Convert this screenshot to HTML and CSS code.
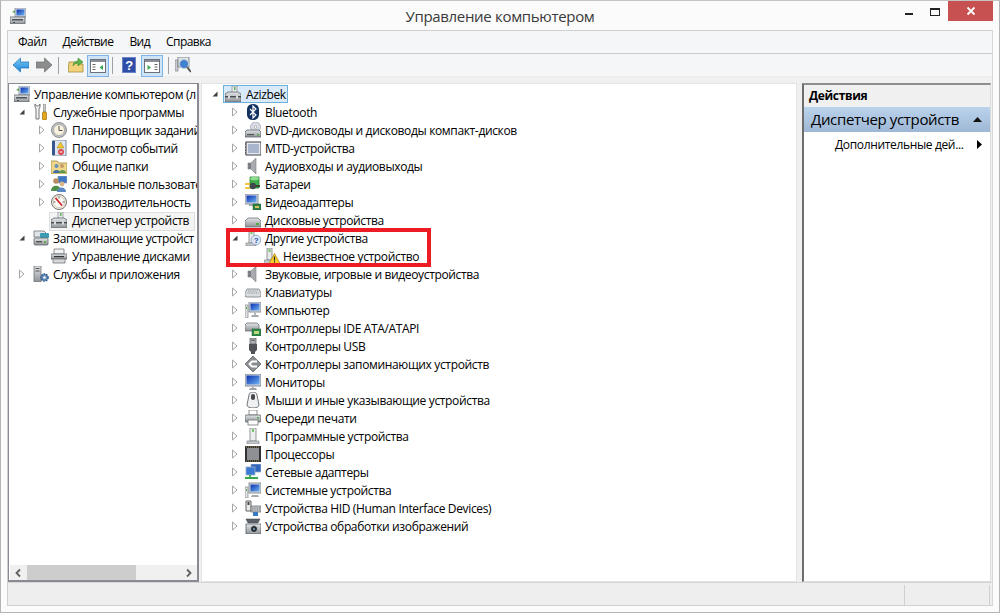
FILE: index.html
```html
<!DOCTYPE html>
<html lang="ru">
<head>
<meta charset="utf-8">
<title>Управление компьютером</title>
<link rel="stylesheet" href="styles.css">
</head>
<body>
<svg class="defs" width="0" height="0" aria-hidden="true">
<defs>
<linearGradient id="blue" x1="0" y1="0" x2="1" y2="1"><stop offset="0" stop-color="#0b2fb0"/><stop offset="1" stop-color="#6fb4f0"/></linearGradient>
<linearGradient id="metal" x1="0" y1="0" x2="0" y2="1"><stop offset="0" stop-color="#e4e6e8"/><stop offset="1" stop-color="#8d9296"/></linearGradient>
<linearGradient id="arrowb" x1="0" y1="0" x2="0" y2="1"><stop offset="0" stop-color="#7cc8f5"/><stop offset="1" stop-color="#1c86d8"/></linearGradient>
<symbol id="exp-c" viewBox="0 0 10 10"><path d="M2.500 1 7 5 2.500 9z" fill="#fff" stroke="#a6a6a6"/></symbol>
<symbol id="exp-o" viewBox="0 0 10 10"><path d="M7.500 2.500v5h-5z" fill="#404040"/></symbol>
<symbol id="mgmt" viewBox="0 0 16 16"><rect x="5" y="0" width="11" height="9" fill="#d5dde6" stroke="#7d8a96" stroke-width=".8"/><rect x="6.500" y="1.500" width="8" height="6" fill="url(#blue)"/><path d="M2 4l3-2v3z" fill="#5aa75a"/><rect x="0" y="9" width="15" height="7" fill="url(#metal)" stroke="#5d6469" stroke-width=".8"/><rect x="2" y="11" width="11" height="1.500" fill="#4d5358"/><rect x="3" y="14" width="2" height="1" fill="#4d5358"/></symbol>
<symbol id="tools" viewBox="0 0 16 16"><path d="M2 0v3l1 2v10h3V5l1-2V0L5.500 2h-2z" fill="#f4f4f4" stroke="#666" stroke-width=".9"/><rect x="10.500" y="0" width="2" height="8" fill="#c8c8c8" stroke="#777" stroke-width=".5"/><rect x="9.500" y="8" width="4" height="8" rx="1" fill="#e6a818" stroke="#8a6405" stroke-width=".6"/></symbol>
<symbol id="clock" viewBox="0 0 16 16"><circle cx="8" cy="8" r="7.500" fill="#c3c7cb" stroke="#777" stroke-width=".8"/><circle cx="8" cy="8" r="5.500" fill="#f7f1de" stroke="#8c8c8c" stroke-width=".6"/><path d="M8 4v4.500h3.500" fill="none" stroke="#555" stroke-width="1"/></symbol>
<symbol id="evlog" viewBox="0 0 16 16"><rect x="2" y="0" width="13" height="16" fill="#dde6f2" stroke="#5f6e8a" stroke-width=".8"/><rect x="1" y="1" width="3" height="14" fill="#3a5690"/><path d="M9.500 2l3.500 6H6z" fill="#f6c92f" stroke="#9a7a10" stroke-width=".5"/><circle cx="10" cy="12" r="3" fill="#d9474a"/><rect x="8.500" y="11.500" width="3" height="1" fill="#fff"/></symbol>
<symbol id="share" viewBox="0 0 16 16"><path d="M0 3h6l2 2h8v11H0z" fill="#efd68a" stroke="#a58b3f" stroke-width=".8"/><circle cx="5.500" cy="8" r="2" fill="#6b8fb8"/><path d="M2 15c0-4 7-4 7 0z" fill="#3d6ea8"/><circle cx="11" cy="8" r="2" fill="#c59a6d"/><path d="M8 15c0-4 7-4 7 0z" fill="#5a9a52"/></symbol>
<symbol id="users" viewBox="0 0 16 16"><rect x="7" y="0" width="9" height="7" fill="#3f78c4" stroke="#8da1b8" stroke-width=".7"/><circle cx="5" cy="5" r="2.800" fill="#b88c62"/><path d="M0 15c0-7 10-7 10 0z" fill="#4f8f4a"/><circle cx="11" cy="8" r="2.400" fill="#d8b48a"/><path d="M6 16c0-6 9-6 9 0z" fill="#5a88c0"/></symbol>
<symbol id="perf" viewBox="0 0 16 16"><circle cx="8" cy="8" r="7.500" fill="#efe9da" stroke="#777" stroke-width="1"/><circle cx="8" cy="8" r="5.500" fill="#fbfbf6" stroke="#b5b0a0" stroke-width=".5"/><path d="M4.500 4 11 11.500" stroke="#d2232a" stroke-width="1.800"/><path d="M8 2.500v2M13.500 8h-2M2.500 8h2" stroke="#444" stroke-width=".8"/></symbol>
<symbol id="devmgr" viewBox="0 0 16 16"><rect x="7" y="0" width="5" height="7" fill="#e8ebee" stroke="#888" stroke-width=".7"/><rect x="9" y="1" width="1.500" height="3" fill="#62b45a"/><path d="M0 8l3-2h10l3 2v8H0z" fill="url(#metal)" stroke="#5d6469" stroke-width=".8"/><rect x="0" y="10" width="16" height="1.400" fill="#454a4f"/><rect x="3" y="9.500" width="2" height="3" fill="#ddd"/><rect x="11" y="9.500" width="2" height="3" fill="#ddd"/></symbol>
<symbol id="storage" viewBox="0 0 16 16"><path d="M1 1h10l2 2v4H1z" fill="#dfe4e8" stroke="#6d7479" stroke-width=".8"/><rect x="7" y="3" width="9" height="5" rx="1" fill="#3b9bb2"/><rect x="1" y="8" width="14" height="7" rx="1" fill="url(#metal)" stroke="#5d6469" stroke-width=".8"/><rect x="3" y="11" width="6" height="1.400" fill="#555"/><rect x="11" y="11" width="2" height="2" fill="#5bb34a"/></symbol>
<symbol id="disk" viewBox="0 0 16 16"><path d="M3 1h10v5H3z" fill="#f3f3f3" stroke="#777" stroke-width=".8"/><path d="M0 6h16v5H0z" fill="url(#metal)" stroke="#5d6469" stroke-width=".8"/><rect x="3" y="8" width="10" height="1.200" fill="#333"/><path d="M2 11h12v4H2z" fill="#d6d8da" stroke="#777" stroke-width=".8"/></symbol>
<symbol id="serv" viewBox="0 0 16 16"><rect x="1" y="0" width="7" height="16" fill="url(#metal)" stroke="#707579" stroke-width=".8"/><rect x="2.500" y="2" width="4" height="1" fill="#555"/><rect x="2.500" y="4.500" width="4" height="1" fill="#555"/><circle cx="11.500" cy="11.500" r="3.600" fill="#5c87b5" stroke="#2f5a89" stroke-width="1.400" stroke-dasharray="1.600 1"/><circle cx="11.500" cy="11.500" r="1.300" fill="#fff"/></symbol>
<symbol id="bt" viewBox="0 0 16 16"><rect x="2" y="0" width="12" height="16" rx="5.500" fill="#10305f"/><path d="M5 5l6 6-3 3V2l3 3-6 6" fill="none" stroke="#fff" stroke-width="1.200"/></symbol>
<symbol id="dvd" viewBox="0 0 16 16"><circle cx="10.500" cy="5" r="5" fill="#d9dce6" stroke="#8b90a0" stroke-width=".6"/><circle cx="10.500" cy="5" r="1.300" fill="#fff" stroke="#888" stroke-width=".5"/><path d="M0 10l2-2h12l2 2v5H0z" fill="url(#metal)" stroke="#5d6469" stroke-width=".8"/><rect x="2" y="12" width="7" height="1.200" fill="#555"/><rect x="12" y="12" width="2" height="1.500" fill="#4fae46"/></symbol>
<symbol id="mtd" viewBox="0 0 16 16"><rect x="1" y="2" width="15" height="13" fill="#e6e8ee" stroke="#3c3f46"/><rect x="3" y="4" width="11" height="9" fill="#a9b5cc"/><path d="M0 4h1M0 7h1M0 10h1M0 13h1" stroke="#333"/></symbol>
<symbol id="spk" viewBox="0 0 16 16"><path d="M3 5h3l5-5v16l-5-5H3z" fill="#a9acaf" stroke="#7d8084" stroke-width=".6"/><path d="M3 5h3v6H3z" fill="#7b7e82"/></symbol>
<symbol id="bat" viewBox="0 0 16 16"><path d="M5 1h9v11H5z" fill="#3fae4c" stroke="#1f7a2c" stroke-width=".8"/><ellipse cx="9.500" cy="2.500" rx="4.500" ry="1.800" fill="#8fdc8e"/><circle cx="8" cy="10" r="3.200" fill="#40474c"/><path d="M0 8h5M0 12h5" stroke="#f0b400" stroke-width="1.400"/><path d="M11 10h4" stroke="#333" stroke-width="1.600"/></symbol>
<symbol id="video" viewBox="0 0 16 16"><rect x="0" y="0" width="13" height="10" fill="#d8dde3" stroke="#6f7880" stroke-width=".8"/><rect x="1.500" y="1.500" width="10" height="7" fill="url(#blue)"/><rect x="4" y="10" width="5" height="2" fill="#a0a5aa"/><rect x="8" y="10" width="8" height="6" fill="#2f7f46" stroke="#1e5c30" stroke-width=".5"/><rect x="10" y="12" width="4" height="2" fill="#d6c25b"/></symbol>
<symbol id="hdd" viewBox="0 0 16 16"><path d="M0 9l3-3h10l3 3v6H0z" fill="url(#metal)" stroke="#6b7277" stroke-width=".8"/><rect x="11" y="11" width="3" height="2" fill="#4fae46"/></symbol>
<symbol id="other" viewBox="0 0 16 16"><rect x="4" y="0" width="5" height="13" fill="#e6e8ea" stroke="#7c8084" stroke-width=".8"/><rect x="5.500" y="1" width="2" height="3" fill="#7cc36e"/><rect x="1" y="13" width="10" height="3" fill="#c4c7ca" stroke="#7c8084" stroke-width=".6"/><circle cx="11" cy="10" r="4.800" fill="#dfe8f6" stroke="#7d94bc" stroke-width=".7"/><text x="11" y="13" font-family="Liberation Sans" font-size="8" font-weight="700" fill="#1e47a0" text-anchor="middle">?</text></symbol>
<symbol id="unk" viewBox="0 0 16 16"><rect x="3" y="0" width="5" height="12" fill="#e6e8ea" stroke="#7c8084" stroke-width=".8"/><rect x="4.500" y="1" width="2" height="3" fill="#7cc36e"/><rect x="0" y="12" width="9" height="4" fill="#c4c7ca" stroke="#7c8084" stroke-width=".6"/><path d="M10.500 5.500 16 15.500H5z" fill="#f8cf2f" stroke="#a67f0c" stroke-width=".7"/><path d="M10.500 8.500v4M10.500 13.300v1.200" stroke="#222" stroke-width="1.200"/></symbol>
<symbol id="kbd" viewBox="0 0 16 16"><path d="M2 5h12l2 4v3l-1 1H1l-1-1V9z" fill="#dadde0" stroke="#777c80" stroke-width=".8"/><path d="M3 7h10M2.500 9h11" stroke="#8f9498" stroke-width="1" stroke-dasharray="1 .7"/></symbol>
<symbol id="comp" viewBox="0 0 16 16"><rect x="0" y="3" width="3" height="13" fill="#dfe2e5" stroke="#777" stroke-width=".6"/><rect x="1" y="5" width="1" height="2" fill="#5bb34a"/><rect x="4" y="0" width="12" height="10" fill="#d8dde3" stroke="#6f7880" stroke-width=".8"/><rect x="5.500" y="1.500" width="9" height="7" fill="url(#blue)"/><path d="M7 13h6l1 2H6z" fill="#a4a9ae"/><rect x="9" y="10" width="2" height="3" fill="#b4b9be"/></symbol>
<symbol id="ide" viewBox="0 0 16 16"><path d="M0 5l2-2h10l2 2v6H0z" fill="url(#metal)" stroke="#6b7277" stroke-width=".8"/><rect x="7" y="9" width="9" height="7" fill="#2f8a4b" stroke="#1e5c30" stroke-width=".5"/><rect x="9" y="11" width="5" height="3" fill="#bcd87e"/></symbol>
<symbol id="usb" viewBox="0 0 16 16"><rect x="5" y="0" width="6" height="6" fill="#aeb2b6" stroke="#555" stroke-width=".7"/><rect x="6.500" y="1.500" width="1" height="1.500" fill="#333"/><rect x="8.500" y="1.500" width="1" height="1.500" fill="#333"/><path d="M4 6h8v6l-2 2v2H6v-2l-2-2z" fill="#505458"/></symbol>
<symbol id="sctl" viewBox="0 0 16 16"><path d="M8 0 16 8l-8 8-8-8z" fill="#8a8e92" stroke="#55595d" stroke-width=".7"/><path d="M12 5.500H7L4.500 8 7 10.500h5" fill="none" stroke="#fff" stroke-width="1.800"/></symbol>
<symbol id="mon" viewBox="0 0 16 16"><rect x="0" y="0" width="16" height="12" fill="#d8dde3" stroke="#5f6870" stroke-width=".8"/><rect x="1.500" y="1.500" width="13" height="9" fill="url(#blue)"/><path d="M5 14h6l1 2H4z" fill="#9ea3a8"/><rect x="7" y="12" width="2" height="2" fill="#b4b9be"/></symbol>
<symbol id="mouse" viewBox="0 0 16 16"><path d="M4 3c0-4 8-4 8 0l2 10c0 4-12 4-12 0z" fill="#eef0f2" stroke="#61666a" stroke-width=".9"/><rect x="6" y="2" width="4" height="6" rx="2" fill="#43474b"/></symbol>
<symbol id="print" viewBox="0 0 16 16"><rect x="4" y="0" width="8" height="5" fill="#fff" stroke="#777" stroke-width=".8"/><rect x="0" y="5" width="16" height="7" rx="1" fill="url(#metal)" stroke="#5d6469" stroke-width=".8"/><rect x="3" y="10" width="10" height="5" fill="#fbfbfb" stroke="#777" stroke-width=".8"/><rect x="12" y="7" width="2" height="1.500" fill="#4fae46"/></symbol>
<symbol id="soft" viewBox="0 0 16 16"><rect x="5" y="0" width="6" height="13" fill="#eceef0" stroke="#7c8084" stroke-width=".8"/><rect x="7" y="1" width="2" height="3" fill="#7cc36e"/><rect x="2" y="13" width="12" height="3" fill="#c4c7ca" stroke="#7c8084" stroke-width=".6"/></symbol>
<symbol id="cpu" viewBox="0 0 16 16"><rect x="0" y="0" width="16" height="16" fill="#2f3133"/><rect x="2" y="2" width="12" height="12" fill="#8e9093"/><path d="M1 1h14M1 15h14" stroke="#c8b56a" stroke-width=".8" stroke-dasharray="1 1"/></symbol>
<symbol id="netw" viewBox="0 0 16 16"><rect x="6" y="0" width="10" height="8" fill="#2f66c0" stroke="#9cb0c8" stroke-width=".8"/><rect x="1" y="3" width="9" height="8" fill="#3a7ad2" stroke="#9cb0c8" stroke-width=".8"/><path d="M5 11v2M0 14h13" stroke="#3aa84a" stroke-width="1.800"/></symbol>
<symbol id="sysd" viewBox="0 0 16 16"><rect x="0" y="5" width="3" height="11" fill="#dfe2e5" stroke="#777" stroke-width=".6"/><rect x="1" y="7" width="1" height="2" fill="#5bb34a"/><rect x="4" y="1" width="12" height="10" fill="#d8dde3" stroke="#6f7880" stroke-width=".8"/><rect x="5.500" y="2.500" width="9" height="7" fill="url(#blue)"/><path d="M7 13h6l1 2H6z" fill="#a4a9ae"/></symbol>
<symbol id="hid" viewBox="0 0 16 16"><path d="M1 1h5v10H1z" fill="#e8eaec" stroke="#555" stroke-width=".9"/><rect x="2.500" y="2" width="2" height="3" fill="#444"/><rect x="6" y="6" width="10" height="6" fill="#c5c9cd" stroke="#666" stroke-width=".7"/><path d="M7 8h8M7 10h8" stroke="#6d7276" stroke-dasharray="1 .7"/><path d="M8 12v4h5v-4" fill="#3a7ac0"/></symbol>
<symbol id="img" viewBox="0 0 16 16"><path d="M1 1h14l-2 4H3z" fill="#5a6066" stroke="#3a3f44" stroke-width=".5"/><rect x="1" y="6" width="15" height="10" fill="url(#metal)" stroke="#5d6469" stroke-width=".8"/><circle cx="9" cy="11" r="3.500" fill="#24282c" stroke="#d5d8db" stroke-width=".8"/><circle cx="9" cy="11" r="1.200" fill="#6c8ab0"/></symbol>
<symbol id="back" viewBox="0 0 16 16"><path d="M0 8 7.500 1v4H16v6H7.500v4z" fill="url(#arrowb)" stroke="#1a70b8" stroke-width=".7"/></symbol>
<symbol id="fwd" viewBox="0 0 16 16"><path d="M16 8 8.500 1v4H0v6h8.500v4z" fill="#8d8d8d" stroke="#6d6d6d" stroke-width=".7"/></symbol>
<symbol id="upf" viewBox="0 0 16 16"><path d="M1 5h6l2 2h6v8H0z" fill="#f2d27a" stroke="#a58b3f" stroke-width=".8"/><path d="M5 9c0-3 2-5 5-5V1l5 4-5 4V6C8 6 6 7 5 9z" fill="#5db54a" stroke="#397f2b" stroke-width=".5"/></symbol>
<symbol id="paneL" viewBox="0 0 16 14"><rect x=".5" y=".5" width="15" height="13" fill="#fff" stroke="#6c7078"/><rect x="1" y="1" width="14" height="2" fill="#8a8e96"/><path d="M2.500 5.500h3M2.500 8h3M2.500 10.500h3" stroke="#666"/><path d="M13 6v5L9.500 8.500z" fill="#3aa84a"/></symbol>
<symbol id="paneR" viewBox="0 0 16 14"><rect x=".5" y=".5" width="15" height="13" fill="#fff" stroke="#6c7078"/><rect x="1" y="1" width="14" height="2" fill="#8a8e96"/><path d="M10.500 5.500h3M10.500 8h3M10.500 10.500h3" stroke="#666"/><path d="M3.500 6v5L7 8.500z" fill="#3aa84a"/></symbol>
<symbol id="helpi" viewBox="0 0 14 16"><rect width="14" height="16" fill="#2f4ea8"/><rect x=".5" y=".5" width="13" height="15" fill="none" stroke="#6a83c8"/><text x="7" y="13" font-family="Liberation Sans" font-size="13" font-weight="700" fill="#fff" text-anchor="middle">?</text></symbol>
<symbol id="scan" viewBox="0 0 16 16"><rect x="0" y="3" width="3" height="11" fill="#c8ccd0" stroke="#777" stroke-width=".6"/><rect x="3" y="0" width="11" height="10" fill="#e0e4e8" stroke="#6f7880" stroke-width=".8"/><circle cx="9" cy="7" r="4.500" fill="#3e82cf" stroke="#c5ccd4"/><path d="M12 10l4 5" stroke="#555" stroke-width="2"/></symbol>
</defs>
</svg>

<div class="window">
  <header class="titlebar">
    <div class="tb-left"><svg class="title-icon"><use href="#mgmt"/></svg></div>
    <div class="title">Управление компьютером</div>
    <div class="controls">
      <div class="ctl"><span class="min"></span></div>
      <div class="ctl"><span class="max"></span></div>
      <div class="close"><svg width="10" height="10" viewBox="0 0 10 10"><path d="M1.500 1.500l7 7M8.500 1.500l-7 7" stroke="#fff" stroke-width="1.800"/></svg></div>
    </div>
  </header>
  <div class="client">
    <nav class="menu"><span>Файл</span><span>Действие</span><span>Вид</span><span>Справка</span></nav>
    <div class="toolbar">
      <svg class="tb-i"><use href="#back"/></svg>
      <svg class="tb-i nearsep"><use href="#fwd"/></svg>
      <i class="sep"></i>
      <svg class="tb-i up"><use href="#upf"/></svg>
      <div class="tb-on"><svg width="16" height="14"><use href="#paneL"/></svg></div>
      <i class="sep"></i>
      <svg class="tb-h"><use href="#helpi"/></svg>
      <div class="tb-on second"><svg width="16" height="14"><use href="#paneR"/></svg></div>
      <i class="sep last"></i>
      <svg class="tb-i"><use href="#scan"/></svg>
    </div>
    <div class="panes">
      <aside class="pane-left">
        <div class="tree-left">
          <div class="row l0"><svg class="ic"><use href="#mgmt"/></svg><span class="lb">Управление компьютером (л</span></div>
          <div class="row l1"><svg class="ex"><use href="#exp-o"/></svg><svg class="ic"><use href="#tools"/></svg><span class="lb">Служебные программы</span></div>
          <div class="row l2"><svg class="ex"><use href="#exp-c"/></svg><svg class="ic"><use href="#clock"/></svg><span class="lb">Планировщик заданий</span></div>
          <div class="row l2"><svg class="ex"><use href="#exp-c"/></svg><svg class="ic"><use href="#evlog"/></svg><span class="lb">Просмотр событий</span></div>
          <div class="row l2"><svg class="ex"><use href="#exp-c"/></svg><svg class="ic"><use href="#share"/></svg><span class="lb">Общие папки</span></div>
          <div class="row l2"><svg class="ex"><use href="#exp-c"/></svg><svg class="ic"><use href="#users"/></svg><span class="lb">Локальные пользовате</span></div>
          <div class="row l2"><svg class="ex"><use href="#exp-c"/></svg><svg class="ic"><use href="#perf"/></svg><span class="lb">Производительность</span></div>
          <div class="row l2 cur"><span class="ex"></span><svg class="ic"><use href="#devmgr"/></svg><span class="lb">Диспетчер устройств</span></div>
          <div class="row l1"><svg class="ex"><use href="#exp-o"/></svg><svg class="ic"><use href="#storage"/></svg><span class="lb">Запоминающие устройст</span></div>
          <div class="row l2"><span class="ex"></span><svg class="ic"><use href="#disk"/></svg><span class="lb">Управление дисками</span></div>
          <div class="row l1"><svg class="ex"><use href="#exp-c"/></svg><svg class="ic"><use href="#serv"/></svg><span class="lb">Службы и приложения</span></div>
        </div>
        <div class="hscroll">
          <svg width="10" height="10" viewBox="0 0 10 10" class="sb-a"><path d="M6.500 1.500 3 5l3.500 3.500" fill="none" stroke="#606060" stroke-width="1.800"/></svg>
          <div class="track"><div class="thumb"></div></div>
          <svg width="10" height="10" viewBox="0 0 10 10" class="sb-a"><path d="M3.500 1.500 7 5 3.500 8.500" fill="none" stroke="#606060" stroke-width="1.800"/></svg>
        </div>
      </aside>
      <main class="pane-mid">
        <div class="row m0"><svg class="ex"><use href="#exp-o"/></svg><div class="root-sel"><svg class="ic"><use href="#devmgr"/></svg><span class="lb">Azizbek</span></div></div>
        <div class="row m1"><svg class="ex"><use href="#exp-c"/></svg><svg class="ic"><use href="#bt"/></svg><span class="lb">Bluetooth</span></div>
        <div class="row m1"><svg class="ex"><use href="#exp-c"/></svg><svg class="ic"><use href="#dvd"/></svg><span class="lb">DVD-дисководы и дисководы компакт-дисков</span></div>
        <div class="row m1"><svg class="ex"><use href="#exp-c"/></svg><svg class="ic"><use href="#mtd"/></svg><span class="lb">MTD-устройства</span></div>
        <div class="row m1"><svg class="ex"><use href="#exp-c"/></svg><svg class="ic"><use href="#spk"/></svg><span class="lb">Аудиовходы и аудиовыходы</span></div>
        <div class="row m1"><svg class="ex"><use href="#exp-c"/></svg><svg class="ic"><use href="#bat"/></svg><span class="lb">Батареи</span></div>
        <div class="row m1"><svg class="ex"><use href="#exp-c"/></svg><svg class="ic"><use href="#video"/></svg><span class="lb">Видеоадаптеры</span></div>
        <div class="row m1"><svg class="ex"><use href="#exp-c"/></svg><svg class="ic"><use href="#hdd"/></svg><span class="lb">Дисковые устройства</span></div>
        <div class="row m1"><svg class="ex"><use href="#exp-o"/></svg><svg class="ic"><use href="#other"/></svg><span class="lb">Другие устройства</span></div>
        <div class="row m2"><svg class="ic"><use href="#unk"/></svg><span class="lb">Неизвестное устройство</span></div>
        <div class="row m1"><svg class="ex"><use href="#exp-c"/></svg><svg class="ic"><use href="#spk"/></svg><span class="lb">Звуковые, игровые и видеоустройства</span></div>
        <div class="row m1"><svg class="ex"><use href="#exp-c"/></svg><svg class="ic"><use href="#kbd"/></svg><span class="lb">Клавиатуры</span></div>
        <div class="row m1"><svg class="ex"><use href="#exp-c"/></svg><svg class="ic"><use href="#comp"/></svg><span class="lb">Компьютер</span></div>
        <div class="row m1"><svg class="ex"><use href="#exp-c"/></svg><svg class="ic"><use href="#ide"/></svg><span class="lb">Контроллеры IDE ATA/ATAPI</span></div>
        <div class="row m1"><svg class="ex"><use href="#exp-c"/></svg><svg class="ic"><use href="#usb"/></svg><span class="lb">Контроллеры USB</span></div>
        <div class="row m1"><svg class="ex"><use href="#exp-c"/></svg><svg class="ic"><use href="#sctl"/></svg><span class="lb">Контроллеры запоминающих устройств</span></div>
        <div class="row m1"><svg class="ex"><use href="#exp-c"/></svg><svg class="ic"><use href="#mon"/></svg><span class="lb">Мониторы</span></div>
        <div class="row m1"><svg class="ex"><use href="#exp-c"/></svg><svg class="ic"><use href="#mouse"/></svg><span class="lb">Мыши и иные указывающие устройства</span></div>
        <div class="row m1"><svg class="ex"><use href="#exp-c"/></svg><svg class="ic"><use href="#print"/></svg><span class="lb">Очереди печати</span></div>
        <div class="row m1"><svg class="ex"><use href="#exp-c"/></svg><svg class="ic"><use href="#soft"/></svg><span class="lb">Программные устройства</span></div>
        <div class="row m1"><svg class="ex"><use href="#exp-c"/></svg><svg class="ic"><use href="#cpu"/></svg><span class="lb">Процессоры</span></div>
        <div class="row m1"><svg class="ex"><use href="#exp-c"/></svg><svg class="ic"><use href="#netw"/></svg><span class="lb">Сетевые адаптеры</span></div>
        <div class="row m1"><svg class="ex"><use href="#exp-c"/></svg><svg class="ic"><use href="#sysd"/></svg><span class="lb">Системные устройства</span></div>
        <div class="row m1"><svg class="ex"><use href="#exp-c"/></svg><svg class="ic"><use href="#hid"/></svg><span class="lb">Устройства HID (Human Interface Devices)</span></div>
        <div class="row m1"><svg class="ex"><use href="#exp-c"/></svg><svg class="ic"><use href="#img"/></svg><span class="lb">Устройства обработки изображений</span></div>
        <div class="redbox"></div>
      </main>
      <aside class="pane-right">
        <div class="act-head">Действия</div>
        <div class="act-bar"><span>Диспетчер устройств</span><svg width="9" height="5" viewBox="0 0 9 5"><path d="M4.500 0 9 5H0z" fill="#111"/></svg></div>
        <div class="act-item"><span>Дополнительные дей...</span><svg width="5" height="9" viewBox="0 0 5 9"><path d="M0 0 5 4.500 0 9z" fill="#000"/></svg></div>
      </aside>
    </div>
    <footer class="status"><div class="st st1"></div><div class="st st2"></div></footer>
  </div>
</div>
</body>
</html>
```

FILE: styles.css
```css
* { box-sizing: border-box; }
html, body { margin: 0; padding: 0; }
body { width: 1000px; height: 613px; overflow: hidden; font-family: "Open Sans", "Noto Sans", sans-serif; font-size: 12px; letter-spacing: -0.35px; color: #000; }
.defs { position: absolute; }
svg { display: block; flex: none; }

.window { width: 1000px; height: 613px; background: #fbfbfb; border: 1px solid #b4b4b4; border-top-color: #c4c4c4; padding: 0 6px 6px; display: flex; flex-direction: column; }
.titlebar { height: 29px; display: grid; grid-template-columns: 1fr auto 1fr; align-items: start; flex: none; margin: 0 -6px 0 -6px; padding: 0 6px; }
.tb-left { display: flex; }
.title-icon { width: 16px; height: 16px; margin: 7px 0 0 3px; }
.title { text-align: center; font-size: 15px; line-height: 20px; color: #3a3a3a; padding-top: 5px; letter-spacing: -0.32px; }
.controls { display: flex; align-items: flex-start; justify-content: flex-end; }
.ctl { width: 26px; height: 19px; display: flex; align-items: center; justify-content: center; }
.min { width: 8px; height: 2px; background: #222; margin-top: 7px; }
.max { width: 10px; height: 8px; border: 1px solid #222; border-top-width: 2px; margin-top: 2px; }
.close { width: 45px; height: 20px; background: #c75050; display: flex; align-items: center; justify-content: center; }

.client { flex: 1; min-height: 0; border: 1px solid #d0d0d0; border-right-color: #d6d6d6; display: flex; flex-direction: column; background: #f0f0f0; }
.menu { height: 23px; background: #f5f6f7; border-bottom: 1px solid #c8cacc; display: flex; align-items: center; flex: none; padding-left: 10px; gap: 16px; letter-spacing: -0.55px; }
.menu span { line-height: 22px; }
.toolbar { height: 23px; background: #f5f6f7; border-bottom: 1px solid #ececec; display: flex; align-items: center; flex: none; padding-left: 5px; }
.tb-i { width: 16px; height: 16px; margin-right: 7px; }
.nearsep { margin-right: 6px; }
.up { margin-right: 3px; }
.sep { width: 1px; height: 17px; background: #a0a0a0; margin-right: 9px; flex: none; }
.sep.last { margin-right: 6px; }
.tb-on { width: 22px; height: 22px; margin: 1px 3px 0 0; align-self: flex-start; background: #cfe3f7; border: 1px solid #7fb4e6; display: flex; align-items: center; justify-content: center; flex: none; }
.tb-on.second { margin-right: 5px; }
.tb-h { width: 14px; height: 16px; margin-right: 5px; }

.panes { flex: 1; min-height: 0; display: flex; padding: 6px 1px 0 0; }
.pane-left { width: 191px; border: 1px solid #8a8a94; border-width: 1px 2px 2px 1px; background: #fff; display: flex; flex-direction: column; flex: none; }
.tree-left { flex: 1; padding-top: 1px; overflow: hidden; }
.row { height: 18px; display: flex; align-items: center; white-space: nowrap; }
.lb { line-height: 18px; padding-top: 1px; }
.ex { width: 10px; height: 10px; flex: none; }
.ic { width: 16px; height: 16px; }
.l0 { padding-left: 5px; }
.l0 .ic { margin-right: 4px; }
.l1 { padding-left: 8px; }
.l1 .ic { margin: 0 4px 0 6px; }
.l2 { padding-left: 28px; }
.l2 .ic { margin: 0 5px 0 4px; }
.cur { position: relative; }
.cur::before { content: ""; position: absolute; left: 40px; top: 1px; width: 144px; height: 17px; background: #f4f4f4; border: 1px solid #dedede; }
.cur .ic, .cur .lb { position: relative; }
.hscroll { height: 15px; margin-left: 1px; background: #f0f0f0; display: flex; align-items: center; flex: none; }
.sb-a { width: 17px; height: 10px; }
.track { flex: 1; height: 15px; }
.thumb { width: 109px; height: 15px; background: #cdcdcd; }

.pane-mid { width: 596px; margin-left: 2px; background: #fff; border: 1px solid #e3e3e3; padding-top: 1px; position: relative; flex: none; overflow: hidden; }
.m0 { padding-left: 8px; }
.m0 .ex { margin-right: 3px; }
.root-sel { height: 18px; width: 65px; display: flex; align-items: center; background: #d9ebfa; border: 1px solid #6fb0d8; }
.root-sel .ic { margin: 0 5px 0 1px; }
.m1 { padding-left: 28px; }
.m1 .ex { margin-right: 5px; }
.m1 .ic { margin-right: 4px; }
.m2 { padding-left: 62px; }
.m2 .ic { margin-right: 3px; }
.redbox { position: absolute; left: 24px; top: 144px; width: 205px; height: 39px; border: 4px solid #ed1c24; }

.pane-right { width: 189px; margin-left: 5px; background: #fff; border: 1px solid #dcdcdc; border-left: 2px solid #6d6d6d; border-top: 2px solid #8e8e8e; flex: none; }
.act-head { height: 22px; background: #f0f0f0; font-weight: 700; padding-left: 5px; line-height: 22px; }
.act-bar { height: 25px; background: linear-gradient(#bbd3ec, #9eb7d5); font-size: 15px; line-height: 27px; padding: 0 8px 0 7px; display: flex; justify-content: space-between; align-items: center; }
.act-item { height: 24px; padding: 0 8px 0 31px; display: flex; justify-content: space-between; align-items: center; }

.status { height: 23px; display: flex; padding: 1px 1px 0 0; border-top: 1px solid #d6d6d6; flex: none; background: #eeeeee; }
.st { height: 20px; border-right: 1px solid #d0d0d0; margin-top: 1px; }
.st1 { width: 897px; }
.st2 { width: 85px; }
```
